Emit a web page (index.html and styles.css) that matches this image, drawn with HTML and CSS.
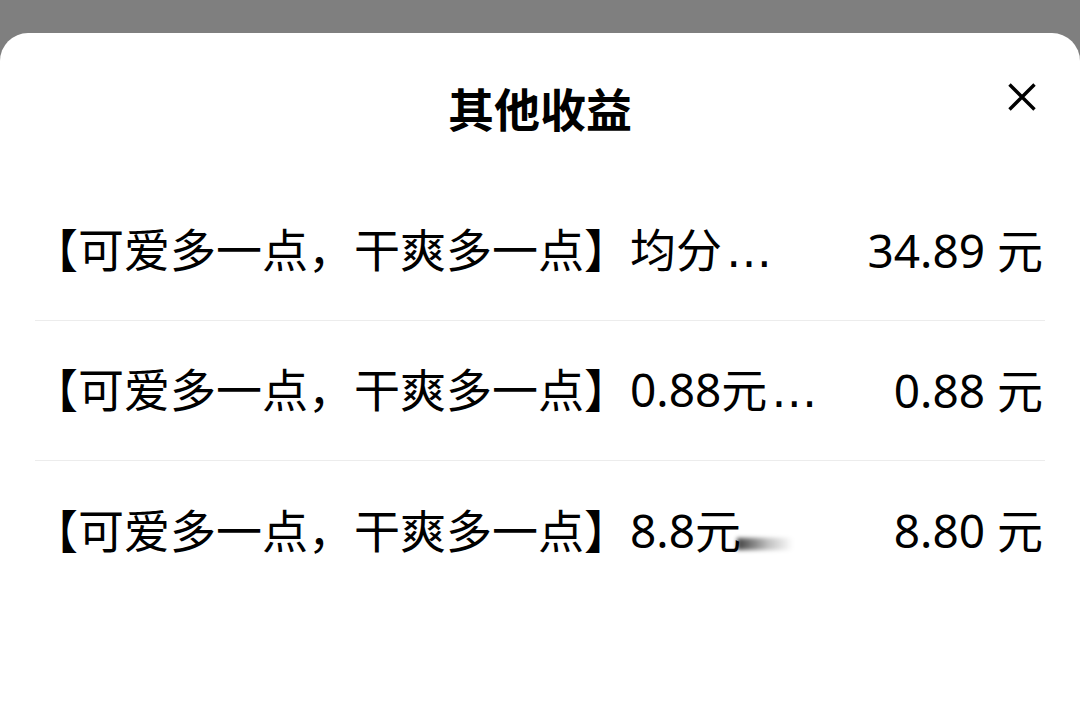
FILE: index.html
```html
<!DOCTYPE html>
<html lang="zh-CN">

<head>
    <meta charset="UTF-8" />
    <meta name="viewport" content="width=device-width, initial-scale=1.0" />
    <title>其他收益</title>

    <link rel="stylesheet" href="styles.css">
</head>

<body>
    <section class="sheet">
        <header class="sheet-header">
            <h1 class="sheet-title">其他收益</h1>
            <button type="button" class="close" aria-label="关闭">
                <svg viewBox="0 0 28 28" width="28" height="28">
                    <path d="M1.5 1.5 L26.5 26.5 M26.5 1.5 L1.5 26.5" stroke="#000" stroke-width="3.4" fill="none" />
                </svg>
            </button>
        </header>

        <ul class="income-list">
            <li class="income">
                <span class="income-name">【可爱多一点，干爽多一点】均分<span class="more">…</span></span>
                <span class="income-amount">34.89 元</span>
            </li>
            <li class="income">
                <span class="income-name">【可爱多一点，干爽多一点】0.88元<span class="more">…</span></span>
                <span class="income-amount">0.88 元</span>
            </li>
            <li class="income">
                <span class="income-name">【可爱多一点，干爽多一点】8.8元<span class="smear"></span></span>
                <span class="income-amount">8.80 元</span>
            </li>
        </ul>
    </section>
</body>

</html>
```

FILE: styles.css
```css
* {
    margin: 0;
    padding: 0;
    box-sizing: border-box;
}

html,
body {
    height: 100%;
}

body {
    background: #7f7f7f;
    font-family: "Noto Sans", "Noto Sans CJK SC", sans-serif;
    color: #000;
    overflow: hidden;
}

.sheet {
    margin-top: 33px;
    height: calc(100% - 33px);
    background: #fff;
    border-radius: 28px 28px 0 0;
}

/**
 * Header: centred title, close button on the right
 */
.sheet-header {
    display: grid;
    grid-template-columns: 1fr auto 1fr;
    align-items: start;
    height: 148px;
    padding: 46px 44px 0;
}

.sheet-title {
    grid-column: 2;
    font-size: 46px;
    font-weight: 700;
    line-height: 60px;
}

.close {
    grid-column: 3;
    justify-self: end;
    margin-top: 4px;
    width: 28px;
    height: 28px;
    border: 0;
    background: none;
    display: block;
}

.close svg {
    display: block;
}

/**
 * Income rows
 */
.income-list {
    list-style: none;
    padding: 0 35px;
}

.income {
    display: flex;
    align-items: center;
    gap: 40px;
    height: 140px;
    padding: 0 2px 2px 0;
    border-bottom: 1px solid #ececec;
    font-size: 46px;
    line-height: 60px;
}

.income:last-child {
    border-bottom: 0;
}

.income-name {
    flex: 1;
    min-width: 0;
    margin-left: -3px;
    white-space: nowrap;
}

.income-name .more {
    font-family: "DejaVu Sans", sans-serif;
    margin-left: 4px;
}

.income-amount {
    flex: none;
    white-space: nowrap;
}

.smear {
    display: inline-block;
    width: 56px;
    height: 12px;
    margin-left: -4px;
    vertical-align: -2px;
    background: linear-gradient(to right, rgba(0, 0, 0, 0.75), rgba(0, 0, 0, 0.25) 55%, rgba(0, 0, 0, 0));
    filter: blur(2px);
}
```
